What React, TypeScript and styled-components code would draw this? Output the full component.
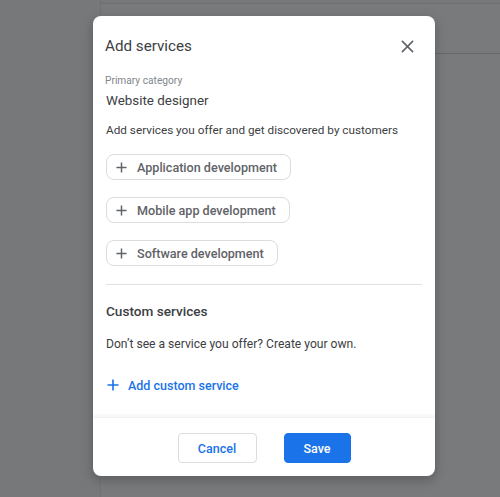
import styled, { createGlobalStyle } from "styled-components";

const GlobalStyle = createGlobalStyle`
  html, body {
    margin: 0;
    padding: 0;
  }
  body {
    font-family: Roboto, "Liberation Sans", Arial, sans-serif;
    -webkit-font-smoothing: antialiased;
  }
  * {
    box-sizing: border-box;
  }
`;

const Page = styled.div`
  position: relative;
  width: 500px;
  height: 497px;
  overflow: hidden;
  display: flex;
  background: #fff;
`;

const Sidebar = styled.div`
  width: 100px;
  flex-shrink: 0;
  background: #f8f9fa;
`;

const Main = styled.div`
  flex: 1;
  border-left: 1px solid #e8eaed;
  display: flex;
  flex-direction: column;
`;

const TopStrip = styled.div`
  height: 4px;
  border-bottom: 1px solid #e0e0e0;
  background: #fafafa;
`;

const HeaderCard = styled.div`
  height: 50px;
  border-bottom: 1px solid #d0d0d0;
  background: #ffffff;
`;

const Scrim = styled.div`
  position: absolute;
  inset: 0;
  background: rgba(32, 33, 36, 0.6);
  display: flex;
  align-items: flex-start;
  padding: 16px 0 0 93px;
`;

const Dialog = styled.div`
  width: 342px;
  background: #fff;
  border-radius: 8px;
  box-shadow: 0 4px 12px rgba(0, 0, 0, 0.25);
  display: flex;
  flex-direction: column;
`;

const Body = styled.div`
  padding: 18px 13px 0 12px;
  display: flex;
  flex-direction: column;
`;

const TitleRow = styled.div`
  display: flex;
  align-items: center;
  justify-content: space-between;
  height: 24px;
`;

const Title = styled.h2`
  margin: 0;
  font-size: 15.2px;
  font-weight: 400;
  color: #3c4043;
`;

const CloseButton = styled.button`
  border: none;
  background: none;
  padding: 0;
  width: 24px;
  height: 24px;
  margin-right: 3px;
  display: flex;
  align-items: center;
  justify-content: center;
  cursor: pointer;
  color: #5f6368;
`;

const Label = styled.div`
  margin-top: 15px;
  font-size: 10.2px;
  line-height: 16px;
  color: #80868b;
`;

const Category = styled.div`
  margin-top: 2px;
  margin-left: 1px;
  font-size: 13.4px;
  line-height: 20px;
  color: #3c4043;
`;

const Text = styled.p<{ $top: number; $size: number }>`
  margin: ${(p) => p.$top}px 0 0 1px;
  font-size: ${(p) => p.$size}px;
  line-height: 20px;
  color: #3c4043;
  white-space: nowrap;
`;

const ChipList = styled.div`
  margin-top: 14px;
  display: flex;
  flex-direction: column;
  align-items: flex-start;
  gap: 17px;
`;

const Chip = styled.button`
  height: 26px;
  margin-left: 1px;
  padding: 0 13px 0 9px;
  display: flex;
  align-items: center;
  gap: 10px;
  border: 1px solid #dadce0;
  border-radius: 8px;
  background: #fff;
  font-family: inherit;
  font-size: 12.6px;
  font-weight: 500;
  color: #5f6368;
  cursor: pointer;
`;

const Divider = styled.hr`
  margin: 18px 0 0 1px;
  border: none;
  border-top: 1px solid #e0e0e0;
`;

const SectionTitle = styled.h3`
  margin: 16px 0 0 1px;
  font-size: 13.6px;
  line-height: 20px;
  font-weight: 500;
  color: #3c4043;
`;

const LinkButton = styled.button`
  margin-top: 21px;
  align-self: flex-start;
  padding: 0 0 0 2px;
  height: 20px;
  border: none;
  background: none;
  display: flex;
  align-items: center;
  gap: 9px;
  font-family: inherit;
  font-size: 12.5px;
  font-weight: 500;
  color: #1a73e8;
  cursor: pointer;
`;

const Footer = styled.div`
  margin-top: 22px;
  padding: 15px 0 13px;
  border-top: 1px solid #f1f3f4;
  box-shadow: 0 -2px 3px rgba(60, 64, 67, 0.05);
  display: flex;
  justify-content: center;
  gap: 27px;
`;

const Button = styled.button<{ $primary?: boolean }>`
  height: 30px;
  width: ${(p) => (p.$primary ? 67 : 79)}px;
  padding: 0;
  border-radius: 4px;
  border: 1px solid ${(p) => (p.$primary ? "#1a73e8" : "#dadce0")};
  background: ${(p) => (p.$primary ? "#1a73e8" : "#fff")};
  color: ${(p) => (p.$primary ? "#fff" : "#1a73e8")};
  font-family: inherit;
  font-size: 12.5px;
  font-weight: 500;
  cursor: pointer;
`;

const PlusIcon = ({ size = 11, color = "currentColor" }: { size?: number; color?: string }) => (
  <svg width={size} height={size} viewBox="0 0 12 12" fill="none">
    <path d="M6 0.5v11M0.5 6h11" stroke={color} strokeWidth="1.6" />
  </svg>
);

const CloseIcon = () => (
  <svg width="13" height="13" viewBox="0 0 14 14" fill="none">
    <path d="M1 1l12 12M13 1L1 13" stroke="#5f6368" strokeWidth="1.7" />
  </svg>
);

const services = ["Application development", "Mobile app development", "Software development"];

export default function App() {
  return (
    <>
      <GlobalStyle />
      <Page>
        <Sidebar />
        <Main>
          <TopStrip />
          <HeaderCard />
        </Main>
        <Scrim>
          <Dialog role="dialog" aria-label="Add services">
            <Body>
              <TitleRow>
                <Title>Add services</Title>
                <CloseButton aria-label="Close">
                  <CloseIcon />
                </CloseButton>
              </TitleRow>
              <Label>Primary category</Label>
              <Category>Website designer</Category>
              <Text $top={9} $size={11.75}>
                Add services you offer and get discovered by customers
              </Text>
              <ChipList>
                {services.map((s) => (
                  <Chip key={s}>
                    <PlusIcon color="#5f6368" />
                    {s}
                  </Chip>
                ))}
              </ChipList>
              <Divider />
              <SectionTitle>Custom services</SectionTitle>
              <Text $top={13} $size={12.1}>
                Don’t see a service you offer? Create your own.
              </Text>
              <LinkButton>
                <PlusIcon size={12} color="#1a73e8" />
                Add custom service
              </LinkButton>
            </Body>
            <Footer>
              <Button>Cancel</Button>
              <Button $primary>Save</Button>
            </Footer>
          </Dialog>
        </Scrim>
      </Page>
    </>
  );
}
